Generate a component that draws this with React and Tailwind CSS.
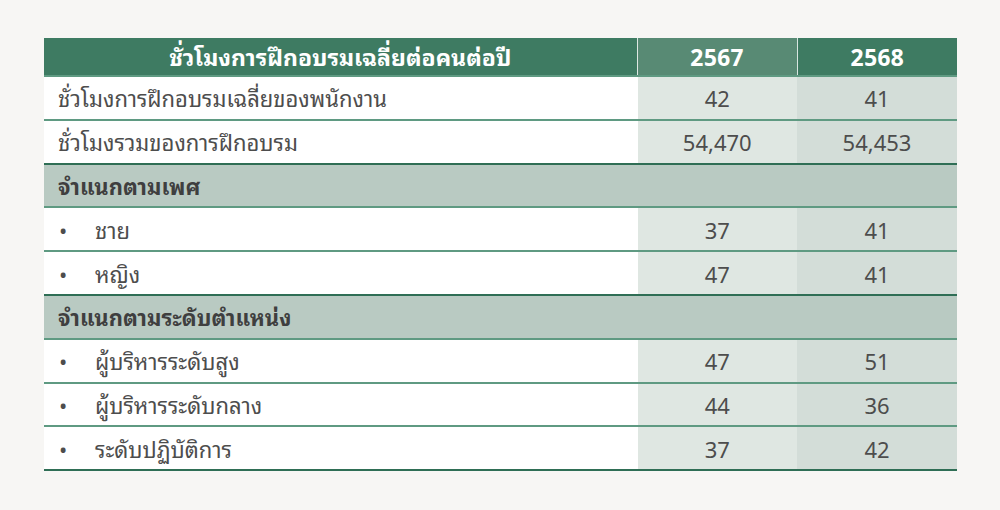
import React from "react";

const rows = [
  { type: "row", label: "ชั่วโมงการฝึกอบรมเฉลี่ยของพนักงาน", a: "42", b: "41" },
  { type: "row", label: "ชั่วโมงรวมของการฝึกอบรม", a: "54,470", b: "54,453" },
  { type: "section", label: "จำแนกตามเพศ" },
  { type: "bullet", label: "ชาย", a: "37", b: "41" },
  { type: "bullet", label: "หญิง", a: "47", b: "41" },
  { type: "section", label: "จำแนกตามระดับตำแหน่ง" },
  { type: "bullet", label: "ผู้บริหารระดับสูง", a: "47", b: "51" },
  { type: "bullet", label: "ผู้บริหารระดับกลาง", a: "44", b: "36" },
  { type: "bullet", label: "ระดับปฏิบัติการ", a: "37", b: "42" },
];

const App = () => {
  return (
    <div
      className="w-[1000px] h-[510px] bg-[#f7f6f4] pt-[38px] pl-[44px]"
      style={{ fontFamily: 'Tahoma, "Noto Sans Thai Looped", "Noto Sans Thai", "Noto Sans", "DejaVu Sans", sans-serif' }}
    >
      <table className="w-[913px] border-collapse text-[22px] text-[#4d4d4d]">
        <thead>
          <tr className="h-[38px] bg-[#3e7b62] text-white text-[23px]">
            <th className="w-[593px] text-center font-bold">ชั่วโมงการฝึกอบรมเฉลี่ยต่อคนต่อปี</th>
            <th className="w-[160px] bg-[#588a74] border-l border-r border-white/80 text-center font-bold">2567</th>
            <th className="w-[160px] text-center font-bold">2568</th>
          </tr>
        </thead>
        <tbody>
          {rows.map((row, i) =>
            row.type === "section" ? (
              <tr key={i} className="h-[43.8px] bg-[#b9cac2] border-t-2 border-[#2f6e55]">
                <td colSpan={3} className="pl-[14px] font-bold text-[22px] text-[#3f3f3f]">
                  {row.label}
                </td>
              </tr>
            ) : (
              <tr key={i} className="h-[43.8px] border-t-2 border-[#5f9a82]">
                <td className="bg-white pl-[14px]">
                  {row.type === "bullet" ? (
                    <div className="flex items-center">
                      <span className="w-[37px] pl-[1px] text-[22px]">•</span>
                      <span>{row.label}</span>
                    </div>
                  ) : (
                    row.label
                  )}
                </td>
                <td className="bg-[#dfe7e2] text-center border-l border-white">{row.a}</td>
                <td className="bg-[#d3ddd8] text-center">{row.b}</td>
              </tr>
            )
          )}
          <tr className="border-t-2 border-[#2f6e55]"></tr>
        </tbody>
      </table>
    </div>
  );
};

export default App;
